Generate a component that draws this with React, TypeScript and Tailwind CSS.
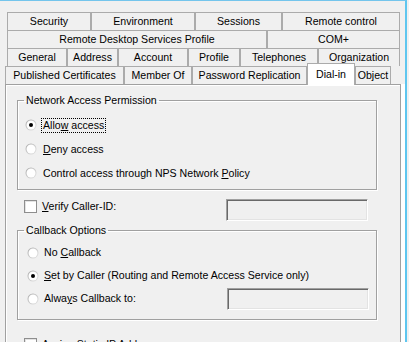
import React from 'react';

interface Tab {
  label: string;
  w: string;
  active?: boolean;
}

const backRows: Tab[][] = [
  [
    { label: 'Security', w: 'w-[84px]' },
    { label: 'Environment', w: 'w-[104px]' },
    { label: 'Sessions', w: 'w-[87px]' },
    { label: 'Remote control', w: 'w-[118px]' },
  ],
  [
    { label: 'Remote Desktop Services Profile', w: 'w-[260px]' },
    { label: 'COM+', w: 'w-[133px]' },
  ],
  [
    { label: 'General', w: 'w-[60px]' },
    { label: 'Address', w: 'w-[51px]' },
    { label: 'Account', w: 'w-[70px]' },
    { label: 'Profile', w: 'w-[52px]' },
    { label: 'Telephones', w: 'w-[78px]' },
    { label: 'Organization', w: 'w-[82px]' },
  ],
];

const frontRow: Tab[] = [
  { label: 'Published Certificates', w: 'w-[119px]' },
  { label: 'Member Of', w: 'w-[68px]' },
  { label: 'Password Replication', w: 'w-[115px]' },
  { label: 'Dial-in', w: 'w-[48px]', active: true },
  { label: 'Object', w: 'w-[36px]' },
];

const TabItem = ({ tab }: { tab: Tab }) => (
  <div
    className={`${tab.w} flex justify-center border-l border-r border-t border-[#ababab] leading-[13px] ${
      tab.active
        ? 'relative z-10 -mt-[3px] h-[22px] items-start pt-[4px] bg-white'
        : 'h-full items-center bg-[#f0f0f0]'
    }`}
  >
    {tab.label}
  </div>
);

const Radio = ({ checked }: { checked?: boolean }) => (
  <svg width="12" height="12" viewBox="0 0 12 12" className="shrink-0">
    <defs>
      <linearGradient id="ring" x1="0" y1="0" x2="1" y2="1">
        <stop offset="0" stopColor="#a8a8a8" />
        <stop offset="1" stopColor="#e8e8e8" />
      </linearGradient>
    </defs>
    <circle cx="6" cy="6" r="5.5" fill="url(#ring)" />
    <circle cx="6" cy="6" r="4.5" fill="#fff" />
    {checked && <circle cx="6" cy="6" r="2" fill="#000" />}
  </svg>
);

const Check = () => (
  <div className="mt-[1px] h-[13px] w-[13px] shrink-0 border border-[#8e8e8e] bg-white shadow-[inset_1px_1px_0_#e3e3e3]" />
);

const TextBox = ({ className }: { className: string }) => (
  <div
    className={`h-[22px] w-[142px] shrink-0 border border-t-[#a0a0a0] border-l-[#a0a0a0] border-r-white border-b-white bg-[#f0f0f0] shadow-[inset_1px_1px_0_#696969,inset_-1px_-1px_0_#e3e3e3] ${className}`}
  />
);

const Accel = ({ before, key_, after }: { before: string; key_: string; after: string }) => (
  <span>
    {before}
    <span className="underline underline-offset-[1px]">{key_}</span>
    {after}
  </span>
);

export default function App() {
  return (
    <div className="flex h-[342px] w-[409px] overflow-hidden bg-[#f0f0f0] font-['Liberation_Sans',Arial,sans-serif] text-[10.6px] text-black">
      <div className="flex h-full w-[407px] flex-col border-t border-r-2 border-t-[#74c5ec] border-r-[#5ec6ef] pt-[11px]">
        {backRows.map((row, i) => (
          <div key={i} className="ml-[7px] flex h-[18px] shrink-0">
            {row.map((t) => (
              <TabItem key={t.label} tab={t} />
            ))}
          </div>
        ))}
        <div className="ml-[5px] flex h-[18px] shrink-0">
          {frontRow.map((t) => (
            <TabItem key={t.label} tab={t} />
          ))}
        </div>

        {/* property page */}
        <div className="ml-[5px] min-h-0 w-[396px] flex-1 border-l border-r border-t border-[#a0a0a0] bg-[#f0f0f0] leading-[13px] shadow-[inset_1px_1px_0_#fff,4px_0_0_#fff]">
          <fieldset className="ml-[11px] mt-[9px] w-[360px] border border-[#a0a0a0] shadow-[1px_1px_0_#fff,inset_1px_1px_0_#fff]">
            <legend className="ml-[6px] px-[2px]">Network Access Permission</legend>
            <div className="flex flex-col pl-[7px] pt-[6px] pb-[4px]">
              <div className="flex h-[24px] items-center gap-[5px]">
                <Radio checked />
                <span className="px-[1px] outline outline-1 outline-dotted outline-black">
                  <Accel before="Allo" key_="w" after=" access" />
                </span>
              </div>
              <div className="flex h-[24px] items-center gap-[6px]">
                <Radio />
                <Accel before="" key_="D" after="eny access" />
              </div>
              <div className="flex h-[24px] items-center gap-[6px]">
                <Radio />
                <Accel before="Control access through NPS Network " key_="P" after="olicy" />
              </div>
            </div>
          </fieldset>

          <div className="ml-[11px] mt-[9px] flex w-[360px] items-start pl-[7px]">
            <Check />
            <span className="ml-[5px] mt-[1px]">
              <Accel before="" key_="V" after="erify Caller-ID:" />
            </span>
            <TextBox className="ml-auto mr-[9px]" />
          </div>

          <fieldset className="ml-[11px] mt-[3px] w-[360px] border border-[#a0a0a0] shadow-[1px_1px_0_#fff,inset_1px_1px_0_#fff]">
            <legend className="ml-[6px] px-[2px]">Callback Options</legend>
            <div className="flex flex-col pl-[9px] pt-[4px] pb-[9px]">
              <div className="flex h-[23px] items-center gap-[5px]">
                <Radio />
                <Accel before="No " key_="C" after="allback" />
              </div>
              <div className="flex h-[23px] items-center gap-[5px]">
                <Radio checked />
                <Accel before="" key_="S" after="et by Caller (Routing and Remote Access Service only)" />
              </div>
              <div className="flex h-[23px] items-center gap-[5px]">
                <Radio />
                <Accel before="Alwa" key_="y" after="s Callback to:" />
                <TextBox className="ml-auto mr-[7px]" />
              </div>
            </div>
          </fieldset>

          <div className="ml-[11px] mt-[17px] flex w-[360px] items-start pl-[7px]">
            <Check />
            <span className="ml-[5px] mt-[1px]">Assign Static IP Addresses</span>
          </div>
        </div>
      </div>
    </div>
  );
}
